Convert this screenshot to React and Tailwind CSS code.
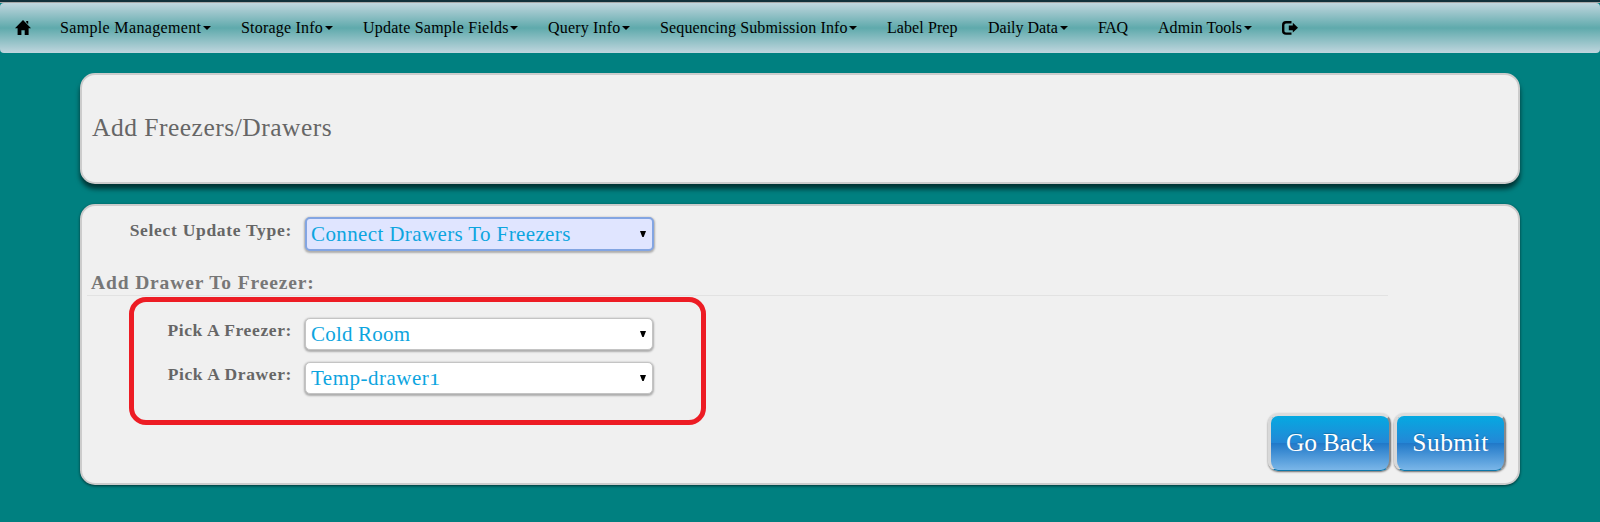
const caret =
  "ml-[2px] inline-block h-0 w-0 border-x-[4px] border-t-[4px] border-x-transparent border-t-black";

const navItems = [
  { label: "Sample Management", menu: true, box: "w-[141px]", track: "tracking-[0.34px]" },
  { label: "Storage Info", menu: true, box: "w-[82px]", track: "tracking-[0.2px]" },
  { label: "Update Sample Fields", menu: true, box: "w-[145px]", track: "tracking-[0.22px]" },
  { label: "Query Info", menu: true, box: "w-[72px]", track: "tracking-[0.18px]" },
  { label: "Sequencing Submission Info", menu: true, box: "w-[187px]", track: "tracking-[0.14px]" },
  { label: "Label Prep", menu: false, box: "w-[71px]", track: "tracking-[0.08px]" },
  { label: "Daily Data", menu: true, box: "w-[70px]", track: "tracking-normal" },
  { label: "FAQ", menu: false, box: "w-[30px]", track: "tracking-[-0.4px]" },
  { label: "Admin Tools", menu: true, box: "w-[84px]", track: "tracking-[0.05px]" },
];

function NavBar() {
  return (
    <nav className="flex h-[50px] items-center rounded-[4px] bg-[linear-gradient(#c0d6de_0%,#5faaac_50%,#c0d6de_100%)] pl-[15px] text-[16px] leading-[20px] text-black">
      <svg className="mr-[29px] h-[16px] w-[16px] shrink-0" viewBox="0 0 16 16">
        <path d="M8 0 L16 8.3 H13.6 V15 H9.7 V10.3 H6.4 V15 H2.6 V8.3 H0 Z M11.2 0.9 h2 v3.4 l-2-2 z" />
      </svg>
      {navItems.map((item) => (
        <div key={item.label} className="mr-[30px] flex shrink-0 items-center whitespace-nowrap">
          <span className={`${item.box} ${item.track}`}>{item.label}</span>
          {item.menu && <span className={caret} />}
        </div>
      ))}
      <svg className="h-[14px] w-[16px] shrink-0" viewBox="0 0 16 14">
        <path d="M9.5 1.2 H4 Q1.2 1.2 1.2 4 V10 Q1.2 12.6 4 12.6 H9.5" fill="none" stroke="#000" strokeWidth="2.4" />
        <path d="M6.8 4.4 H10.8 V1.8 L16 6.8 L10.8 11.6 V9.2 H6.8 Z" />
      </svg>
    </nav>
  );
}

function Select({ children, focused, track }) {
  const tone = focused
    ? "border-[#83a5e2] bg-[#e0e5ff] border-2 w-[349px] h-[34px] pl-[4px] pr-[6px]"
    : "border-[#c4c4c4] bg-white border w-[348px] h-[32px] pl-[5px] pr-[6px]";
  return (
    <div
      className={`flex items-center justify-between rounded-[5px] text-[21px] leading-[24px] text-[#0da5df] shadow-[0_1px_2px_1px_rgba(0,0,0,0.28)] ${tone}`}
    >
      <span className={`whitespace-nowrap ${track}`}>{children}</span>
      <svg className="h-[6px] w-[6px]" viewBox="0 0 6 6">
        <path d="M0 0 H6 L3.7 6 H2.3 Z" fill="#000" />
      </svg>
    </div>
  );
}

function Field({ label, labelPad, labelTrack, children }) {
  return (
    <div className="flex items-start">
      <label
        className={`w-[210px] shrink-0 whitespace-nowrap text-right text-[17.5px] font-bold leading-[20px] text-[#666] ${labelPad} ${labelTrack}`}
      >
        {label}
      </label>
      <div className="ml-[13px]">{children}</div>
    </div>
  );
}

function Button({ children, className }) {
  return (
    <button
      className={`h-[58px] rounded-[10px] border-[3px] border-b-[1px] border-r-[2px] border-l-[#d8d8d8] border-r-[#8a8a8a] border-t-[#dcdcdc] border-b-[#0e76a8] bg-[linear-gradient(#05a9e1_0%,#2487d6_50%,#1f78c8_50%,#7ab6e8_100%)] text-[25.5px] leading-[28px] text-white shadow-[0_1px_2px_0px_rgba(0,0,0,0.55)] [text-shadow:0_-1px_1px_rgba(0,0,0,0.2)] ${className}`}
    >
      {children}
    </button>
  );
}

export default function App() {
  return (
    <div className="h-[522px] w-[1600px] overflow-hidden bg-[#008080] font-['Liberation_Serif',serif]">
      <div className="h-[3px] border-b border-[#a8a8a8] bg-[#12303a]" />
      <NavBar />

      <main className="mx-[80px] mt-[20px]">
        <section className="flex h-[111px] items-center rounded-[15px] border-2 border-[#ccc] bg-[#f0f0f0] pb-[2px] pl-[10px] shadow-[0_5px_5px_0_rgba(0,0,0,0.6)]">
          <h1 className="whitespace-nowrap text-[25.5px] leading-[28px] tracking-[0.5px] text-[#666]">
            Add Freezers/Drawers
          </h1>
        </section>

        <section className="relative mt-[20px] flex h-[281px] flex-col rounded-[15px] border-2 border-[#ccc] bg-[#f0f0f0] shadow-[0_1px_3px_rgba(0,0,0,0.6)]">
          <div className="mt-[11px]">
            <Field label="Select Update Type:" labelPad="pt-[3px]" labelTrack="tracking-[0.7px]">
              <Select focused track="tracking-[0.38px]">Connect Drawers To Freezers</Select>
            </Field>
          </div>

          <h2 className="ml-[5px] mt-[19px] h-[26px] w-[1301px] whitespace-nowrap border-b border-[#e2e2e2] pl-[4px] text-[19.5px] font-bold leading-[25px] tracking-[0.87px] text-[#777]">
            Add Drawer To Freezer:
          </h2>

          <div className="mt-[22px] flex flex-col gap-[12px]">
            <Field label="Pick A Freezer:" labelPad="pt-[2px]" labelTrack="tracking-[0.62px]">
              <Select track="tracking-[0.2px]">Cold Room</Select>
            </Field>
            <Field label="Pick A Drawer:" labelPad="pt-[2px]" labelTrack="tracking-[0.62px]">
              <Select track="tracking-[0.5px]">
                Temp-drawer
                <span className="inline-block origin-bottom-left scale-x-140 text-[16px] leading-[16px]">1</span>
              </Select>
            </Field>
          </div>

          <div className="mr-[12px] mt-[19px] flex justify-end gap-[3px]">
            <Button className="w-[123px] tracking-[-0.3px]">Go Back</Button>
            <Button className="w-[112px] tracking-[0.45px]">Submit</Button>
          </div>

          <div className="pointer-events-none absolute left-[47px] top-[91px] h-[128px] w-[577px] rounded-[17px] border-[5px] border-[#ed1c24]" />
        </section>
      </main>
    </div>
  );
}
